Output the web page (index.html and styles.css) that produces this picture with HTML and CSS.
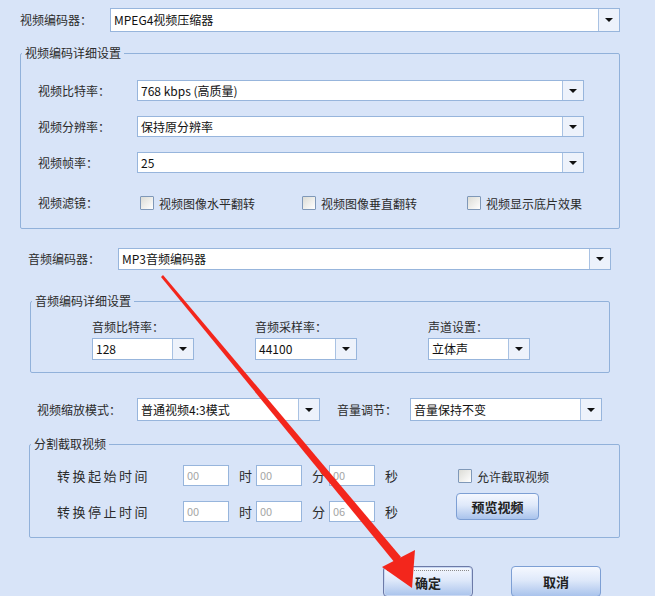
FILE: index.html
```html
<!DOCTYPE html>
<html lang="zh-CN">
<head>
    <meta charset="UTF-8">
    <meta name="viewport" content="width=device-width, initial-scale=1.0">
    <title>视频转换设置</title>
    <link rel="stylesheet" href="styles.css">
</head>
<body>
    <div class="dialog">
        <div class="row row-video">
            <span class="label w90">视频编码器：</span>
            <div class="combo grow">
                <span class="combo-value">MPEG4视频压缩器</span>
                <span class="combo-btn"></span>
            </div>
        </div>

        <fieldset class="group group-video">
            <legend>视频编码详细设置</legend>
            <div class="group-body">
                <div class="field-row">
                    <span class="label w99">视频比特率：</span>
                    <div class="combo w447">
                        <span class="combo-value">768 kbps (高质量)</span>
                        <span class="combo-btn"></span>
                    </div>
                </div>
                <div class="field-row">
                    <span class="label w99">视频分辨率：</span>
                    <div class="combo w447">
                        <span class="combo-value">保持原分辨率</span>
                        <span class="combo-btn"></span>
                    </div>
                </div>
                <div class="field-row">
                    <span class="label w99">视频帧率：</span>
                    <div class="combo w447">
                        <span class="combo-value">25</span>
                        <span class="combo-btn"></span>
                    </div>
                </div>
                <div class="check-row">
                    <span class="label w102">视频滤镜：</span>
                    <label class="check w162"><span class="box"></span>视频图像水平翻转</label>
                    <label class="check w165"><span class="box"></span>视频图像垂直翻转</label>
                    <label class="check"><span class="box"></span>视频显示底片效果</label>
                </div>
            </div>
        </fieldset>

        <div class="row row-audio">
            <span class="label w90">音频编码器：</span>
            <div class="combo grow">
                <span class="combo-value">MP3音频编码器</span>
                <span class="combo-btn"></span>
            </div>
        </div>

        <fieldset class="group group-audio">
            <legend>音频编码详细设置</legend>
            <div class="group-body audio-grid">
                <div class="audio-col">
                    <span class="label">音频比特率：</span>
                    <div class="combo w102">
                        <span class="combo-value">128</span>
                        <span class="combo-btn"></span>
                    </div>
                </div>
                <div class="audio-col">
                    <span class="label">音频采样率：</span>
                    <div class="combo w102">
                        <span class="combo-value">44100</span>
                        <span class="combo-btn"></span>
                    </div>
                </div>
                <div class="audio-col">
                    <span class="label">声道设置：</span>
                    <div class="combo w102">
                        <span class="combo-value">立体声</span>
                        <span class="combo-btn"></span>
                    </div>
                </div>
            </div>
        </fieldset>

        <div class="row row-scale">
            <span class="label w100">视频缩放模式：</span>
            <div class="combo w183">
                <span class="combo-value">普通视频4:3模式</span>
                <span class="combo-btn"></span>
            </div>
            <span class="label w73 volume-label">音量调节：</span>
            <div class="combo w192">
                <span class="combo-value">音量保持不变</span>
                <span class="combo-btn"></span>
            </div>
        </div>

        <fieldset class="group group-cut">
            <legend>分割截取视频</legend>
            <div class="group-body cut-body">
                <div class="cut-times">
                    <div class="time-row">
                        <span class="time-label">转换起始时间</span>
                        <span class="time-box">00</span><span class="unit">时</span>
                        <span class="time-box">00</span><span class="unit">分</span>
                        <span class="time-box">00</span><span class="unit">秒</span>
                    </div>
                    <div class="time-row">
                        <span class="time-label">转换停止时间</span>
                        <span class="time-box">00</span><span class="unit">时</span>
                        <span class="time-box">00</span><span class="unit">分</span>
                        <span class="time-box">06</span><span class="unit">秒</span>
                    </div>
                </div>
                <div class="cut-side">
                    <label class="check"><span class="box"></span>允许截取视频</label>
                    <button class="btn btn-preview">预览视频</button>
                </div>
            </div>
        </fieldset>

        <div class="actions">
            <button class="btn btn-main btn-ok"><span>确定</span></button>
            <button class="btn btn-main">取消</button>
        </div>
    </div>

    <!-- red annotation arrow drawn over the dialog -->
    <svg class="arrow" width="655" height="596" viewBox="0 0 655 596">
        <polygon points="161,277 163,275 401,557 395,563" fill="#f3261c"/>
        <polygon points="382,567 415,550 412,588" fill="#f3261c"/>
    </svg>
</body>
</html>
```

FILE: styles.css
```css
body {
    margin: 0;
    width: 655px;
    height: 596px;
    overflow: hidden;
    position: relative;
    background: #d8e4f8;
    font-family: "Noto Sans CJK SC", "Noto Sans", sans-serif;
    font-size: 12px;
    color: #2b2b2b;
}

.dialog {
    padding: 8px 0 0 20px;
}

.row {
    display: flex;
    align-items: center;
}

.label {
    flex: none;
    line-height: 14px;
    white-space: nowrap;
}

.w73 { width: 73px; }
.w90 { width: 90px; }
.w99 { width: 99px; }
.w100 { width: 100px; }
.w102 { width: 102px; }
.w162 { width: 162px; }
.w165 { width: 165px; }
.w183 { width: 183px; }
.w192 { width: 192px; }
.w447 { width: 447px; }
.grow { flex: 1; }

/* combo boxes */
.combo {
    display: flex;
    box-sizing: border-box;
    height: 21px;
    border: 1px solid #97b5dc;
    background: #fff;
    flex: none;
}

.combo.grow {
    flex: 1;
}

.combo-value {
    flex: 1;
    padding-left: 3px;
    line-height: 19px;
    color: #111;
    white-space: nowrap;
    overflow: hidden;
}

.combo-btn {
    width: 20px;
    border-left: 1px solid #a9c2e3;
    background: #edf2fb;
    display: flex;
    align-items: center;
    justify-content: center;
}

.combo-btn::after {
    content: "";
    border-left: 4px solid transparent;
    border-right: 4px solid transparent;
    border-top: 4px solid #111;
}

.row-video {
    width: 600px;
    height: 24px;
}

.row-video .combo {
    height: 24px;
}

.row-video .combo-value {
    line-height: 22px;
}

/* group boxes */
.group {
    margin: 0;
    padding: 0;
    min-width: 0;
    box-sizing: border-box;
    border: 1px solid #91b1da;
    border-radius: 2px;
}

.group legend {
    margin-left: 1px;
    padding: 0 3px;
    line-height: 16px;
    color: #2b2b2b;
}

.group-video {
    margin-top: 13px;
    width: 600px;
}

.group-video .group-body {
    padding: 19px 0 17px 17px;
}

.field-row {
    display: flex;
    align-items: center;
    height: 21px;
    margin-bottom: 15px;
}

.field-row:nth-child(3) {
    margin-bottom: 22px;
}

.check-row {
    display: flex;
    align-items: center;
    height: 16px;
}

.check {
    display: flex;
    align-items: center;
    gap: 5px;
    white-space: nowrap;
    flex: none;
}

.box {
    width: 12px;
    height: 12px;
    border: 1px solid #7f98b8;
    border-radius: 1px;
    background: linear-gradient(135deg, #dcdcd6, #ffffff);
}

.row-audio {
    margin: 19px 0 0 8px;
    width: 583px;
    height: 22px;
}

.row-audio .combo {
    height: 22px;
}

.row-audio .combo-value {
    line-height: 20px;
}

.group-audio {
    margin: 23px 0 0 10px;
    width: 580px;
}

.audio-grid {
    display: grid;
    grid-template-columns: 163px 173px 102px;
    padding: 11px 0 12px 61px;
}

.audio-col {
    display: flex;
    flex-direction: column;
    gap: 4px;
}

.audio-col .combo {
    height: 22px;
}

.audio-col .combo-value {
    line-height: 20px;
}

.row-scale {
    margin: 25px 0 0 17px;
    height: 23px;
}

.row-scale .combo {
    height: 23px;
}

.row-scale .combo-value {
    line-height: 21px;
}

.volume-label {
    margin-left: 17px;
}

.group-cut {
    margin: 15px 0 0 9px;
    width: 591px;
}

.cut-body {
    display: flex;
    padding: 13px 0 15px 27px;
}

.cut-times {
    width: 399px;
    display: flex;
    flex-direction: column;
    gap: 15px;
}

.time-row {
    display: flex;
    align-items: center;
    height: 21px;
}

.time-label {
    width: 126px;
    font-size: 13px;
    letter-spacing: 2.5px;
}

.time-box {
    box-sizing: border-box;
    width: 46px;
    height: 21px;
    border: 1px solid #97b5dc;
    background: #fff;
    color: #a6a6a6;
    font-size: 11px;
    line-height: 19px;
    padding-left: 3px;
}

.unit {
    width: 27px;
    box-sizing: border-box;
    padding-left: 10px;
    font-size: 13px;
}

.cut-side {
    display: flex;
    flex-direction: column;
    align-items: flex-start;
    padding-top: 4px;
}

.cut-side .check {
    margin-left: 2px;
    height: 14px;
}

/* buttons */
.btn {
    box-sizing: border-box;
    border: 1px solid #7d9fd4;
    border-radius: 4px;
    background: linear-gradient(#f5f8ff, #dfe9fa 45%, #a9c3ec);
    font-family: inherit;
    font-size: 13px;
    font-weight: bold;
    color: #222;
    padding: 0;
    cursor: pointer;
}

.btn-preview {
    margin-top: 10px;
    width: 83px;
    height: 27px;
}

.actions {
    display: flex;
    gap: 38px;
    margin: 28px 0 0 363px;
}

.btn-main {
    width: 90px;
    height: 31px;
}

.btn-ok {
    border-color: #6c7aa8;
    box-shadow: inset 0 0 0 1px #c9d8f2;
}

.btn-ok span {
    display: block;
    margin: 3px;
    line-height: 23px;
    border-top: 1px dotted #8a8a8a;
}

.arrow {
    position: absolute;
    left: 0;
    top: 0;
    pointer-events: none;
}
```
